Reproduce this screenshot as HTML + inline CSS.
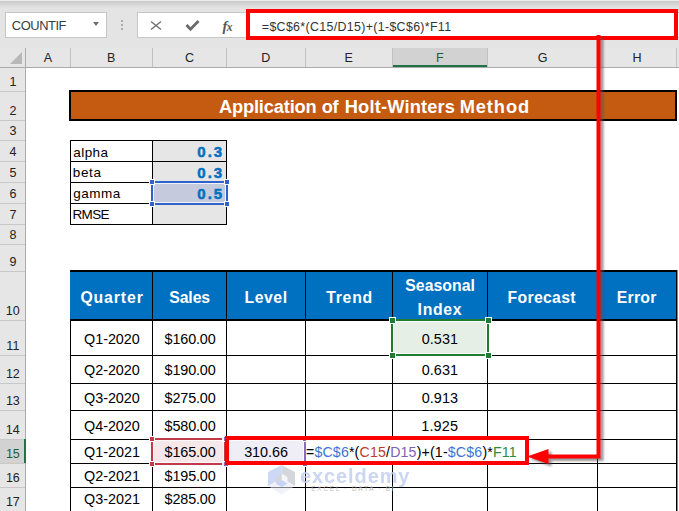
<!DOCTYPE html>
<html><head><meta charset="utf-8">
<style>
*{margin:0;padding:0;box-sizing:border-box}
html,body{width:679px;height:511px;overflow:hidden;background:#fff;font-family:"Liberation Sans",sans-serif}
body{position:relative}
.a{position:absolute}
.t{position:absolute;white-space:nowrap;line-height:1}
</style></head><body>
<div class="a" style="left:0px;top:0px;width:679px;height:48px;background:#e4e4e4"></div>
<div class="a" style="left:0px;top:0px;width:679px;height:1px;background:#ececec"></div>
<div class="a" style="left:0px;top:1px;width:679px;height:7px;background:linear-gradient(#c8c8c8,#d0d0d0 20%,#e3e3e3)"></div>
<div class="a" style="left:5px;top:12px;width:102px;height:26px;background:#fff;border:1px solid #c6c6c6"></div>
<div class="t" style="left:11.80px;top:19.68px;font-size:12.9px;letter-spacing:-0.433px;color:#3a3a3a;font-weight:normal;font-family:'Liberation Sans';">COUNTIF</div>
<div class="a" style="left:93px;top:22px;width:0;height:0;border-left:3.7px solid transparent;border-right:3.7px solid transparent;border-top:4.3px solid #6e6e6e"></div>
<div class="a" style="left:121px;top:20px;width:2px;height:2px;background:#adadad"></div>
<div class="a" style="left:121px;top:24px;width:2px;height:2px;background:#adadad"></div>
<div class="a" style="left:121px;top:28px;width:2px;height:2px;background:#adadad"></div>
<div class="a" style="left:137px;top:12px;width:560px;height:26px;background:#fff;border:1px solid #c6c6c6"></div>
<svg class="a" style="left:0;top:0" width="260" height="48" viewBox="0 0 260 48">
 <path d="M151 21.5 L161 29.5 M161 21.5 L151 29.5" stroke="#737373" stroke-width="1.5" fill="none"/>
 <path d="M186.5 25 L190.5 29.3 L198.5 21" stroke="#6b6b6b" stroke-width="2.8" fill="none"/>
</svg>
<div class="t" style="left:222.5px;top:18.5px;font-family:'Liberation Serif',serif;font-style:italic;font-weight:bold;font-size:14.5px;color:#555">f<span style="font-size:11.5px;position:relative;left:-0.5px">x</span></div>
<div class="t" style="left:261.82px;top:20.90px;font-size:12.4px;letter-spacing:0.335px;color:#333;font-weight:normal;font-family:'Liberation Sans';">=$C$6*(C15/D15)+(1-$C$6)*F11</div>
<div class="a" style="left:0px;top:48px;width:679px;height:19px;background:#e6e6e6"></div>
<div class="a" style="left:392px;top:48px;width:96px;height:19px;background:#d2d2d2"></div>
<div class="a" style="left:392px;top:65px;width:96px;height:2px;background:#217346"></div>
<div class="a" style="left:0px;top:67px;width:679px;height:1px;background:#ababab"></div>
<svg class="a" style="left:0;top:48px" width="25" height="19"><path d="M22 4 L22 16 L10 16 Z" fill="#b8b8b8"/></svg>
<div class="a" style="left:25px;top:48px;width:1px;height:19px;background:#c0c0c0"></div>
<div class="a" style="left:70px;top:48px;width:1px;height:19px;background:#c0c0c0"></div>
<div class="a" style="left:152px;top:48px;width:1px;height:19px;background:#c0c0c0"></div>
<div class="a" style="left:226px;top:48px;width:1px;height:19px;background:#c0c0c0"></div>
<div class="a" style="left:305px;top:48px;width:1px;height:19px;background:#c0c0c0"></div>
<div class="a" style="left:392px;top:48px;width:1px;height:19px;background:#c0c0c0"></div>
<div class="a" style="left:487px;top:48px;width:1px;height:19px;background:#c0c0c0"></div>
<div class="a" style="left:597px;top:48px;width:1px;height:19px;background:#c0c0c0"></div>
<div class="a" style="left:676px;top:48px;width:1px;height:19px;background:#c0c0c0"></div>
<div class="t" style="left:43.80px;top:52.32px;font-size:12.5px;letter-spacing:0.000px;color:#222;font-weight:normal;font-family:'Liberation Sans';">A</div>
<div class="t" style="left:107.11px;top:52.32px;font-size:12.5px;letter-spacing:0.000px;color:#222;font-weight:normal;font-family:'Liberation Sans';">B</div>
<div class="t" style="left:184.91px;top:52.32px;font-size:12.5px;letter-spacing:0.000px;color:#222;font-weight:normal;font-family:'Liberation Sans';">C</div>
<div class="t" style="left:261.21px;top:52.32px;font-size:12.5px;letter-spacing:0.000px;color:#222;font-weight:normal;font-family:'Liberation Sans';">D</div>
<div class="t" style="left:344.61px;top:52.32px;font-size:12.5px;letter-spacing:0.000px;color:#222;font-weight:normal;font-family:'Liberation Sans';">E</div>
<div class="t" style="left:435.90px;top:52.32px;font-size:12.5px;letter-spacing:0.000px;color:#1e5c3a;font-weight:normal;font-family:'Liberation Sans';">F</div>
<div class="t" style="left:537.81px;top:52.32px;font-size:12.5px;letter-spacing:0.000px;color:#222;font-weight:normal;font-family:'Liberation Sans';">G</div>
<div class="t" style="left:632.51px;top:52.32px;font-size:12.5px;letter-spacing:0.000px;color:#222;font-weight:normal;font-family:'Liberation Sans';">H</div>
<div class="a" style="left:0px;top:68px;width:25px;height:443px;background:#e6e6e6"></div>
<div class="a" style="left:0px;top:439px;width:25px;height:24px;background:#d2d2d2"></div>
<div class="a" style="left:0px;top:91px;width:25px;height:1px;background:#c8c8c8"></div>
<div class="t" style="left:9.39px;top:76.42px;font-size:12.5px;letter-spacing:0.000px;color:#222;font-weight:normal;font-family:'Liberation Sans';">1</div>
<div class="a" style="left:0px;top:120px;width:25px;height:1px;background:#c8c8c8"></div>
<div class="t" style="left:9.48px;top:105.42px;font-size:12.5px;letter-spacing:0.000px;color:#222;font-weight:normal;font-family:'Liberation Sans';">2</div>
<div class="a" style="left:0px;top:140px;width:25px;height:1px;background:#c8c8c8"></div>
<div class="t" style="left:9.58px;top:125.42px;font-size:12.5px;letter-spacing:0.000px;color:#222;font-weight:normal;font-family:'Liberation Sans';">3</div>
<div class="a" style="left:0px;top:161px;width:25px;height:1px;background:#c8c8c8"></div>
<div class="t" style="left:9.58px;top:146.42px;font-size:12.5px;letter-spacing:0.000px;color:#222;font-weight:normal;font-family:'Liberation Sans';">4</div>
<div class="a" style="left:0px;top:182px;width:25px;height:1px;background:#c8c8c8"></div>
<div class="t" style="left:9.58px;top:167.42px;font-size:12.5px;letter-spacing:0.000px;color:#222;font-weight:normal;font-family:'Liberation Sans';">5</div>
<div class="a" style="left:0px;top:203px;width:25px;height:1px;background:#c8c8c8"></div>
<div class="t" style="left:9.48px;top:188.42px;font-size:12.5px;letter-spacing:0.000px;color:#222;font-weight:normal;font-family:'Liberation Sans';">6</div>
<div class="a" style="left:0px;top:224px;width:25px;height:1px;background:#c8c8c8"></div>
<div class="t" style="left:9.48px;top:209.42px;font-size:12.5px;letter-spacing:0.000px;color:#222;font-weight:normal;font-family:'Liberation Sans';">7</div>
<div class="a" style="left:0px;top:244px;width:25px;height:1px;background:#c8c8c8"></div>
<div class="t" style="left:9.58px;top:229.42px;font-size:12.5px;letter-spacing:0.000px;color:#222;font-weight:normal;font-family:'Liberation Sans';">8</div>
<div class="a" style="left:0px;top:271px;width:25px;height:1px;background:#c8c8c8"></div>
<div class="t" style="left:9.48px;top:256.42px;font-size:12.5px;letter-spacing:0.000px;color:#222;font-weight:normal;font-family:'Liberation Sans';">9</div>
<div class="a" style="left:0px;top:320px;width:25px;height:1px;background:#c8c8c8"></div>
<div class="t" style="left:5.81px;top:305.42px;font-size:12.5px;letter-spacing:0.000px;color:#222;font-weight:normal;font-family:'Liberation Sans';">10</div>
<div class="a" style="left:0px;top:355px;width:25px;height:1px;background:#c8c8c8"></div>
<div class="t" style="left:6.37px;top:340.42px;font-size:12.5px;letter-spacing:0.000px;color:#222;font-weight:normal;font-family:'Liberation Sans';">11</div>
<div class="a" style="left:0px;top:383px;width:25px;height:1px;background:#c8c8c8"></div>
<div class="t" style="left:5.91px;top:368.42px;font-size:12.5px;letter-spacing:0.000px;color:#222;font-weight:normal;font-family:'Liberation Sans';">12</div>
<div class="a" style="left:0px;top:410px;width:25px;height:1px;background:#c8c8c8"></div>
<div class="t" style="left:5.91px;top:395.42px;font-size:12.5px;letter-spacing:0.000px;color:#222;font-weight:normal;font-family:'Liberation Sans';">13</div>
<div class="a" style="left:0px;top:439px;width:25px;height:1px;background:#c8c8c8"></div>
<div class="t" style="left:5.81px;top:424.42px;font-size:12.5px;letter-spacing:0.000px;color:#222;font-weight:normal;font-family:'Liberation Sans';">14</div>
<div class="a" style="left:0px;top:463px;width:25px;height:1px;background:#c8c8c8"></div>
<div class="t" style="left:5.91px;top:448.42px;font-size:12.5px;letter-spacing:0.000px;color:#1e5c3a;font-weight:normal;font-family:'Liberation Sans';">15</div>
<div class="a" style="left:0px;top:487px;width:25px;height:1px;background:#c8c8c8"></div>
<div class="t" style="left:5.91px;top:472.42px;font-size:12.5px;letter-spacing:0.000px;color:#222;font-weight:normal;font-family:'Liberation Sans';">16</div>
<div class="a" style="left:0px;top:511px;width:25px;height:1px;background:#c8c8c8"></div>
<div class="t" style="left:5.91px;top:496.42px;font-size:12.5px;letter-spacing:0.000px;color:#222;font-weight:normal;font-family:'Liberation Sans';">17</div>
<div class="a" style="left:25px;top:48px;width:1px;height:463px;background:#ababab"></div>
<div class="a" style="left:24px;top:439px;width:2px;height:24px;background:#217346"></div>
<div class="a" style="left:69px;top:90px;width:608px;height:31px;background:#c55a11;border:2px solid #000"></div>
<div class="t" style="left:219.01px;top:97.51px;font-size:18.3px;letter-spacing:-0.186px;color:#fff;font-weight:bold;font-family:'Liberation Sans';">Application</div>
<div class="t" style="left:321.83px;top:97.51px;font-size:18.3px;letter-spacing:-0.397px;color:#fff;font-weight:bold;font-family:'Liberation Sans';">of</div>
<div class="t" style="left:344.76px;top:97.51px;font-size:18.3px;letter-spacing:0.161px;color:#fff;font-weight:bold;font-family:'Liberation Sans';">Holt-Winters</div>
<div class="t" style="left:459.66px;top:97.51px;font-size:18.3px;letter-spacing:0.893px;color:#fff;font-weight:bold;font-family:'Liberation Sans';">Method</div>
<div class="a" style="left:152px;top:140px;width:74px;height:84px;background:#e7e6e6"></div>
<div class="a" style="left:152px;top:182px;width:74px;height:21px;background:#c5cbdd"></div>
<div class="t" style="left:73.18px;top:145.87px;font-size:13.5px;letter-spacing:0.476px;color:#000;font-weight:normal;font-family:'Liberation Sans';">alpha</div>
<div class="t" style="left:72.76px;top:166.27px;font-size:13.5px;letter-spacing:0.661px;color:#000;font-weight:normal;font-family:'Liberation Sans';">beta</div>
<div class="t" style="left:73.18px;top:187.17px;font-size:13.5px;letter-spacing:0.505px;color:#000;font-weight:normal;font-family:'Liberation Sans';">gamma</div>
<div class="t" style="left:72.55px;top:207.97px;font-size:13.5px;letter-spacing:-0.694px;color:#000;font-weight:normal;font-family:'Liberation Sans';">RMSE</div>
<div class="t" style="left:197.33px;top:144.10px;font-size:15px;letter-spacing:1.995px;color:#0070c0;font-weight:bold;font-family:'Liberation Sans';-webkit-text-stroke:0.5px #0070c0">0.3</div>
<div class="t" style="left:197.33px;top:165.10px;font-size:15px;letter-spacing:1.995px;color:#0070c0;font-weight:bold;font-family:'Liberation Sans';-webkit-text-stroke:0.5px #0070c0">0.3</div>
<div class="t" style="left:197.33px;top:185.90px;font-size:15px;letter-spacing:1.995px;color:#0070c0;font-weight:bold;font-family:'Liberation Sans';-webkit-text-stroke:0.5px #0070c0">0.5</div>
<div class="a" style="left:70px;top:140px;width:157px;height:1px;background:#000"></div>
<div class="a" style="left:70px;top:161px;width:157px;height:1px;background:#000"></div>
<div class="a" style="left:70px;top:182px;width:157px;height:1px;background:#000"></div>
<div class="a" style="left:70px;top:203px;width:157px;height:1px;background:#000"></div>
<div class="a" style="left:70px;top:224px;width:157px;height:1px;background:#000"></div>
<div class="a" style="left:70px;top:140px;width:1px;height:85px;background:#000"></div>
<div class="a" style="left:152px;top:140px;width:1px;height:85px;background:#000"></div>
<div class="a" style="left:226px;top:140px;width:1px;height:85px;background:#000"></div>
<div class="a" style="left:70px;top:271px;width:607px;height:49px;background:#0070c0"></div>
<div class="t" style="left:80.41px;top:289.83px;font-size:15.8px;letter-spacing:0.891px;color:#fff;font-weight:bold;font-family:'Liberation Sans';">Quarter</div>
<div class="t" style="left:169.25px;top:289.83px;font-size:15.8px;letter-spacing:-0.101px;color:#fff;font-weight:bold;font-family:'Liberation Sans';">Sales</div>
<div class="t" style="left:244.51px;top:289.83px;font-size:15.8px;letter-spacing:0.530px;color:#fff;font-weight:bold;font-family:'Liberation Sans';">Level</div>
<div class="t" style="left:326.20px;top:289.83px;font-size:15.8px;letter-spacing:0.748px;color:#fff;font-weight:bold;font-family:'Liberation Sans';">Trend</div>
<div class="t" style="left:507.51px;top:289.83px;font-size:15.8px;letter-spacing:0.315px;color:#fff;font-weight:bold;font-family:'Liberation Sans';">Forecast</div>
<div class="t" style="left:616.71px;top:289.83px;font-size:15.8px;letter-spacing:0.269px;color:#fff;font-weight:bold;font-family:'Liberation Sans';">Error</div>
<div class="t" style="left:405.25px;top:277.63px;font-size:15.8px;letter-spacing:0.043px;color:#fff;font-weight:bold;font-family:'Liberation Sans';">Seasonal</div>
<div class="t" style="left:417.61px;top:302.03px;font-size:15.8px;letter-spacing:0.680px;color:#fff;font-weight:bold;font-family:'Liberation Sans';">Index</div>
<div class="a" style="left:393px;top:321px;width:95px;height:34px;background:#e5efe6"></div>
<div class="a" style="left:152px;top:439px;width:74px;height:25px;background:#f6e7e9"></div>
<div class="a" style="left:227px;top:440px;width:78px;height:23px;background:#efedf5"></div>
<div class="t" style="left:84.12px;top:331.61px;font-size:14.4px;letter-spacing:-0.068px;color:#000;font-weight:normal;font-family:'Liberation Sans';">Q1-2020</div>
<div class="t" style="left:164.60px;top:331.61px;font-size:14.4px;letter-spacing:-0.149px;color:#000;font-weight:normal;font-family:'Liberation Sans';">$160.00</div>
<div class="t" style="left:421.75px;top:331.61px;font-size:14.4px;letter-spacing:0.050px;color:#000;font-weight:normal;font-family:'Liberation Sans';">0.531</div>
<div class="t" style="left:84.12px;top:362.71px;font-size:14.4px;letter-spacing:-0.068px;color:#000;font-weight:normal;font-family:'Liberation Sans';">Q2-2020</div>
<div class="t" style="left:164.60px;top:362.71px;font-size:14.4px;letter-spacing:-0.149px;color:#000;font-weight:normal;font-family:'Liberation Sans';">$190.00</div>
<div class="t" style="left:421.75px;top:362.71px;font-size:14.4px;letter-spacing:0.050px;color:#000;font-weight:normal;font-family:'Liberation Sans';">0.631</div>
<div class="t" style="left:84.12px;top:390.61px;font-size:14.4px;letter-spacing:-0.068px;color:#000;font-weight:normal;font-family:'Liberation Sans';">Q3-2020</div>
<div class="t" style="left:164.60px;top:390.61px;font-size:14.4px;letter-spacing:-0.149px;color:#000;font-weight:normal;font-family:'Liberation Sans';">$275.00</div>
<div class="t" style="left:421.75px;top:390.61px;font-size:14.4px;letter-spacing:0.050px;color:#000;font-weight:normal;font-family:'Liberation Sans';">0.913</div>
<div class="t" style="left:84.12px;top:418.91px;font-size:14.4px;letter-spacing:-0.068px;color:#000;font-weight:normal;font-family:'Liberation Sans';">Q4-2020</div>
<div class="t" style="left:164.60px;top:418.91px;font-size:14.4px;letter-spacing:-0.149px;color:#000;font-weight:normal;font-family:'Liberation Sans';">$580.00</div>
<div class="t" style="left:421.30px;top:418.91px;font-size:14.4px;letter-spacing:0.162px;color:#000;font-weight:normal;font-family:'Liberation Sans';">1.925</div>
<div class="t" style="left:84.12px;top:444.81px;font-size:14.4px;letter-spacing:-0.030px;color:#000;font-weight:normal;font-family:'Liberation Sans';">Q1-2021</div>
<div class="t" style="left:164.60px;top:444.81px;font-size:14.4px;letter-spacing:-0.149px;color:#000;font-weight:normal;font-family:'Liberation Sans';">$165.00</div>
<div class="t" style="left:84.12px;top:469.01px;font-size:14.4px;letter-spacing:-0.030px;color:#000;font-weight:normal;font-family:'Liberation Sans';">Q2-2021</div>
<div class="t" style="left:164.60px;top:469.01px;font-size:14.4px;letter-spacing:-0.149px;color:#000;font-weight:normal;font-family:'Liberation Sans';">$195.00</div>
<div class="t" style="left:84.12px;top:492.41px;font-size:14.4px;letter-spacing:-0.030px;color:#000;font-weight:normal;font-family:'Liberation Sans';">Q3-2021</div>
<div class="t" style="left:164.60px;top:492.41px;font-size:14.4px;letter-spacing:-0.149px;color:#000;font-weight:normal;font-family:'Liberation Sans';">$285.00</div>
<div class="t" style="left:244.15px;top:444.81px;font-size:14.4px;letter-spacing:-0.042px;color:#000;font-weight:normal;font-family:'Liberation Sans';">310.66</div>
<div class="a" style="left:70px;top:270px;width:607px;height:2px;background:#000"></div>
<div class="a" style="left:70px;top:319px;width:607px;height:2px;background:#000"></div>
<div class="a" style="left:70px;top:355px;width:607px;height:1px;background:#000"></div>
<div class="a" style="left:70px;top:383px;width:607px;height:1px;background:#000"></div>
<div class="a" style="left:70px;top:410px;width:607px;height:1px;background:#000"></div>
<div class="a" style="left:70px;top:439px;width:607px;height:1px;background:#000"></div>
<div class="a" style="left:70px;top:463px;width:607px;height:1px;background:#000"></div>
<div class="a" style="left:70px;top:487px;width:607px;height:1px;background:#000"></div>
<div class="a" style="left:152px;top:270px;width:1px;height:241px;background:#000"></div>
<div class="a" style="left:226px;top:270px;width:1px;height:241px;background:#000"></div>
<div class="a" style="left:305px;top:270px;width:1px;height:241px;background:#000"></div>
<div class="a" style="left:392px;top:270px;width:1px;height:241px;background:#000"></div>
<div class="a" style="left:487px;top:270px;width:1px;height:241px;background:#000"></div>
<div class="a" style="left:597px;top:270px;width:1px;height:241px;background:#000"></div>
<div class="a" style="left:70px;top:319px;width:1px;height:192px;background:#000"></div>
<div class="a" style="left:676px;top:270px;width:1px;height:241px;background:#000"></div>
<div class="a" style="left:677px;top:270px;width:1px;height:241px;background:#888"></div>
<div class="a" style="left:151px;top:181px;width:77px;height:24px;border:2px solid #2f62cc;box-shadow:inset 0 0 0 1px rgba(255,255,255,0.75)"></div>
<div class="a" style="left:148.8px;top:178.8px;width:6.5px;height:6.5px;background:#2f62cc;border:1px solid #fff"></div>
<div class="a" style="left:223.8px;top:178.8px;width:6.5px;height:6.5px;background:#2f62cc;border:1px solid #fff"></div>
<div class="a" style="left:148.8px;top:200.8px;width:6.5px;height:6.5px;background:#2f62cc;border:1px solid #fff"></div>
<div class="a" style="left:223.8px;top:200.8px;width:6.5px;height:6.5px;background:#2f62cc;border:1px solid #fff"></div>
<div class="a" style="left:391px;top:319px;width:98px;height:37px;border:2px solid #1e7b30;box-shadow:inset 0 0 0 1px rgba(255,255,255,0.75)"></div>
<div class="a" style="left:388.5px;top:316.5px;width:7px;height:7px;background:#1e7b30;border:1px solid #fff"></div>
<div class="a" style="left:484.5px;top:316.5px;width:7px;height:7px;background:#1e7b30;border:1px solid #fff"></div>
<div class="a" style="left:388.5px;top:351.5px;width:7px;height:7px;background:#1e7b30;border:1px solid #fff"></div>
<div class="a" style="left:484.5px;top:351.5px;width:7px;height:7px;background:#1e7b30;border:1px solid #fff"></div>
<div class="a" style="left:151px;top:438px;width:75px;height:27px;border:2px solid #c03a48;box-shadow:inset 0 0 0 1px rgba(255,255,255,0.75)"></div>
<div class="a" style="left:148.8px;top:435.8px;width:6.5px;height:6.5px;background:#c03a48;border:1px solid #fff"></div>
<div class="a" style="left:221.8px;top:435.8px;width:6.5px;height:6.5px;background:#c03a48;border:1px solid #fff"></div>
<div class="a" style="left:148.8px;top:460.8px;width:6.5px;height:6.5px;background:#c03a48;border:1px solid #fff"></div>
<div class="a" style="left:221.8px;top:460.8px;width:6.5px;height:6.5px;background:#c03a48;border:1px solid #fff"></div>
<div class="a" style="left:225px;top:438px;width:81px;height:27px;border:2px solid #8a6bc0;box-shadow:inset 0 0 0 1px rgba(255,255,255,0.75)"></div>
<div class="a" style="left:223.0px;top:436.0px;width:6px;height:6px;background:#8a6bc0;border:1px solid #fff"></div>
<div class="a" style="left:302.0px;top:436.0px;width:6px;height:6px;background:#8a6bc0;border:1px solid #fff"></div>
<div class="a" style="left:223.0px;top:461.0px;width:6px;height:6px;background:#8a6bc0;border:1px solid #fff"></div>
<div class="a" style="left:302.0px;top:461.0px;width:6px;height:6px;background:#8a6bc0;border:1px solid #fff"></div>
<div class="a" style="left:306px;top:440px;width:220px;height:23px;background:#fff"></div>
<div class="t" style="left:305.93px;top:444.58px;font-size:14.2px;letter-spacing:0.160px;color:#000;font-weight:normal;font-family:'Liberation Sans';">=<span style="color:#3b74d4">$C$6</span>*(<span style="color:#c0392b">C15</span>/<span style="color:#7f5fb8">D15</span>)+(1-<span style="color:#3b74d4">$C$6</span>)*<span style="color:#2e8b3a">F11</span></div>
<svg class="a" style="left:0;top:0" width="679" height="511" viewBox="0 0 679 511">
 <path d="M281.6 465 L268 472 L268 486 L281.6 478 Z" fill="#cbd8f6"/>
 <path d="M281.6 465 L295 472 L295 486 L281.6 478 Z" fill="#d3d6db"/>
 <path d="M268 486 L281.6 494.5 L295 486 L281.6 478 Z" fill="#e4e8f2" opacity="0.55"/>
 <path d="M281.6 473.5 L287.5 477 L287.5 483.5 L281.6 480 Z" fill="#f4f6f8"/>
 <path d="M281.6 473.5 L275.7 477 L275.7 483.5 L281.6 480 Z" fill="#d3d6db"/>
 <path d="M275.7 483.5 L281.6 480 L287.5 483.5 L281.6 487 Z" fill="#c6d3f4"/>
</svg>
<div class="a" style="left:246px;top:9px;width:432px;height:31px;border:4px solid #ff0000"></div>
<div class="a" style="left:225px;top:436px;width:304px;height:29px;border:4px solid #ff0000"></div>
<svg class="a" style="left:0;top:0" width="679" height="511" viewBox="0 0 679 511">
 <defs><filter id="sh" x="-20%" y="-20%" width="140%" height="140%"><feGaussianBlur stdDeviation="1.2"/></filter></defs>
 <g opacity="0.6" filter="url(#sh)" transform="translate(3,2.5)">
  <path d="M598.5 35 L598.5 456.5 L546 456.5" stroke="#555" stroke-width="4" fill="none"/>
  <path d="M527 456.5 L548.5 449 L548.5 464 Z" fill="#555"/>
 </g>
 <path d="M598.5 35 L598.5 456.5 L546 456.5" stroke="#ff0000" stroke-width="4" fill="none" stroke-linejoin="miter"/>
 <path d="M527 456.5 L548.5 449 L548.5 464 Z" fill="#ff0000"/>
</svg>
<div class="t" style="left:299.98px;top:465.57px;font-size:20px;letter-spacing:0.900px;color:#c2cff0;font-weight:bold;font-family:'Liberation Sans';opacity:0.85">exceldemy</div>
<div class="t" style="left:311.29px;top:486.30px;font-size:6.5px;letter-spacing:1.726px;color:#bcbcbc;font-weight:normal;font-family:'Liberation Sans';">EXCEL · DATA · BI</div>
</body></html>
